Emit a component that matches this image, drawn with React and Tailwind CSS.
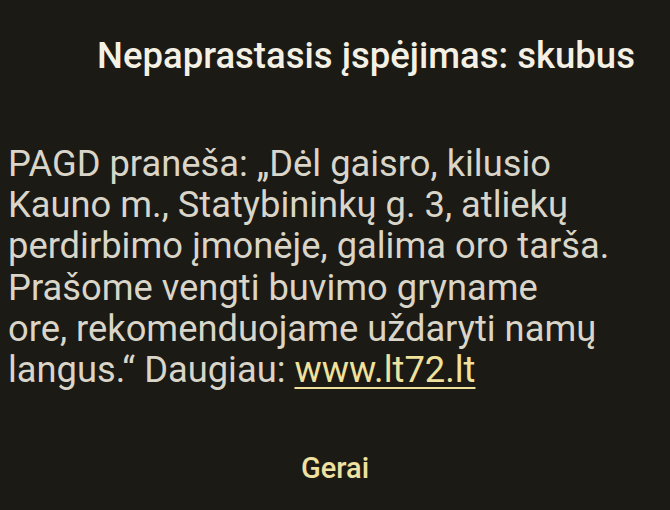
export default function App() {
  return (
    <div
      className="w-[670px] h-[510px] bg-[#1c1a14] flex flex-col overflow-hidden"
      style={{ fontFamily: 'Roboto, "Noto Sans", sans-serif' }}
    >
      {/* Title */}
      <h1 className="pl-[97px] pt-[36px] text-[36.5px] leading-[40px] font-medium text-[#f4f0e4] whitespace-nowrap">
        Nepaprastasis įspėjimas: skubus
      </h1>

      {/* Message */}
      <p className="mt-[67px] pl-[8px] text-[36.3px] leading-[41.2px] text-[#d9d5c9] whitespace-nowrap">
        PAGD praneša: „Dėl gaisro, kilusio
        <br />
        Kauno m., Statybininkų g. 3, atliekų
        <br />
        perdirbimo įmonėje, galima oro tarša.
        <br />
        Prašome vengti buvimo gryname
        <br />
        ore, rekomenduojame uždaryti namų
        <br />
        langus.“ Daugiau:{' '}
        <a href="#" className="text-[#f0e29c] underline decoration-2 underline-offset-[5px]">
          www.lt72.lt
        </a>
      </p>

      {/* Action */}
      <div className="flex justify-center mt-[60px]">
        <button className="text-[29px] leading-[36px] font-medium text-[#efe1a2]">Gerai</button>
      </div>
    </div>
  )
}
